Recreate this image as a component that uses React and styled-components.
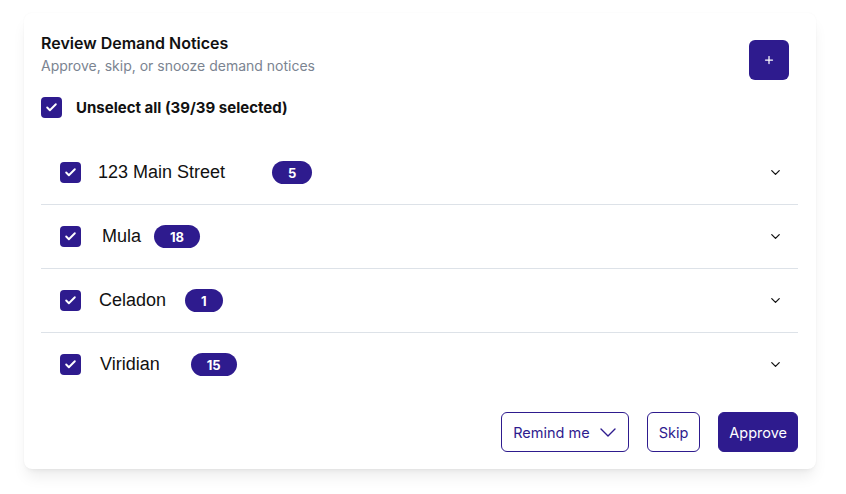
import React, { useState } from 'react'
import styled, { createGlobalStyle } from 'styled-components'
import { Check, ChevronDown, Plus } from 'lucide-react'

const ink = '#2e1b8e'

const GlobalStyle = createGlobalStyle`
    body {
        margin: 0;
        background: #fff;
        font-family: Inter, "Noto Sans", sans-serif;
    }
`

const Page = styled.div`
    padding: 13px 30px 25px 24px;
`

const Card = styled.section`
    width: 792px;
    box-sizing: border-box;
    background: #fff;
    border-radius: 8px;
    padding: 20px 18px 17px 17px;
    box-shadow: 0 10px 15px -3px rgba(0, 0, 0, 0.08), 0 4px 6px -4px rgba(0, 0, 0, 0.08), 0 0 2px rgba(0, 0, 0, 0.04);
`

const Header = styled.div`
    display: flex;
    justify-content: space-between;
    align-items: flex-start;
    padding-right: 9px;
`

const Title = styled.h2`
    margin: 0;
    font-size: 16px;
    line-height: 20px;
    font-weight: 600;
    color: #111;
`

const Subtitle = styled.p`
    margin: 3px 0 0;
    font-size: 14px;
    line-height: 20px;
    color: #7b8491;
`

const IconButton = styled.button`
    width: 40px;
    height: 40px;
    margin-top: 7px;
    border: none;
    border-radius: 6px;
    background: ${ink};
    color: #fff;
    display: flex;
    align-items: center;
    justify-content: center;
    padding: 0;
    cursor: pointer;
`

const SelectAll = styled.label`
    display: flex;
    align-items: center;
    gap: 14px;
    margin-top: 17px;
    font-size: 15px;
    line-height: 20px;
    font-weight: 700;
    color: #111;
    cursor: pointer;
`

const Box = styled.span`
    width: 21px;
    height: 21px;
    flex: none;
    border-radius: 4px;
    background: ${(p) => (p.$on ? ink : '#fff')};
    border: ${(p) => (p.$on ? 'none' : `1px solid ${ink}`)};
    box-sizing: border-box;
    display: flex;
    align-items: center;
    justify-content: center;
    color: #fff;
`

const List = styled.div`
    margin-top: 24px;
`

const Row = styled.div`
    display: flex;
    align-items: center;
    height: 63px;
    padding: 0 15px 0 19px;
    border-top: ${(p) => (p.$first ? 'none' : '1px solid #dde2e8')};
    margin-top: ${(p) => (p.$first ? '-1px' : '0')};
`

const Name = styled.span`
    margin-left: ${(p) => p.$indent}px;
    font-family: "Liberation Sans", Arial, sans-serif;
    font-size: 18px;
    color: #111;
`

const Badge = styled.span`
    margin-left: ${(p) => p.$gap}px;
    height: 23px;
    padding: 0 16px;
    border-radius: 12px;
    background: ${ink};
    color: #fff;
    font-size: 13px;
    font-weight: 700;
    display: flex;
    align-items: center;
`

const Toggle = styled.span`
    margin-left: auto;
    display: flex;
    color: #111;
`

const Actions = styled.div`
    display: flex;
    justify-content: flex-end;
    gap: 18px;
    margin-top: 16px;
`

const Action = styled.button`
    height: 40px;
    padding: ${(p) => p.$pad};
    border-radius: 6px;
    border: 1px solid ${ink};
    background: ${(p) => (p.$primary ? ink : '#fff')};
    color: ${(p) => (p.$primary ? '#fff' : ink)};
    font-family: Inter, "Noto Sans", sans-serif;
    font-size: 14.5px;
    display: flex;
    align-items: center;
    gap: 10px;
    cursor: pointer;
`

const notices = [
    { id: 1, name: '123 Main Street', count: 5, indent: 17, gap: 47 },
    { id: 2, name: 'Mula', count: 18, indent: 21, gap: 13 },
    { id: 3, name: 'Celadon', count: 1, indent: 18, gap: 19 },
    { id: 4, name: 'Viridian', count: 15, indent: 19, gap: 31 },
]

function Caret() {
    return (
        <svg width="16" height="9" viewBox="0 0 16 9" fill="none">
            <path d="M1 1l7 7 7-7" stroke="currentColor" strokeWidth="1.4" strokeLinecap="round" strokeLinejoin="round" />
        </svg>
    )
}

export default function App() {
    const [selected, setSelected] = useState(notices.map((n) => n.id))
    const allOn = selected.length === notices.length

    const toggle = (id) => {
        setSelected((s) => (s.includes(id) ? s.filter((x) => x !== id) : [...s, id]))
    }

    return (
        <Page>
            <GlobalStyle />
            <Card>
                <Header>
                    <div>
                        <Title>Review Demand Notices</Title>
                        <Subtitle>Approve, skip, or snooze demand notices</Subtitle>
                    </div>
                    <IconButton aria-label="Add">
                        <Plus size={12} strokeWidth={2.5} />
                    </IconButton>
                </Header>

                <SelectAll onClick={() => setSelected(allOn ? [] : notices.map((n) => n.id))}>
                    <Box $on={allOn}>{allOn && <Check size={13} strokeWidth={3.5} />}</Box>
                    {allOn ? 'Unselect all (39/39 selected)' : 'Select all (0/39 selected)'}
                </SelectAll>

                <List>
                    {notices.map((n, i) => {
                        const on = selected.includes(n.id)
                        return (
                            <Row key={n.id} $first={i === 0}>
                                <Box $on={on} onClick={() => toggle(n.id)}>
                                    {on && <Check size={13} strokeWidth={3.5} />}
                                </Box>
                                <Name $indent={n.indent}>{n.name}</Name>
                                <Badge $gap={n.gap}>{n.count}</Badge>
                                <Toggle>
                                    <ChevronDown size={15} strokeWidth={2} />
                                </Toggle>
                            </Row>
                        )
                    })}
                </List>

                <Actions>
                    <Action $pad="0 12px 0 11px">
                        Remind me
                        <Caret />
                    </Action>
                    <Action $pad="0 11px">Skip</Action>
                    <Action $pad="0 10px" $primary>Approve</Action>
                </Actions>
            </Card>
        </Page>
    )
}
